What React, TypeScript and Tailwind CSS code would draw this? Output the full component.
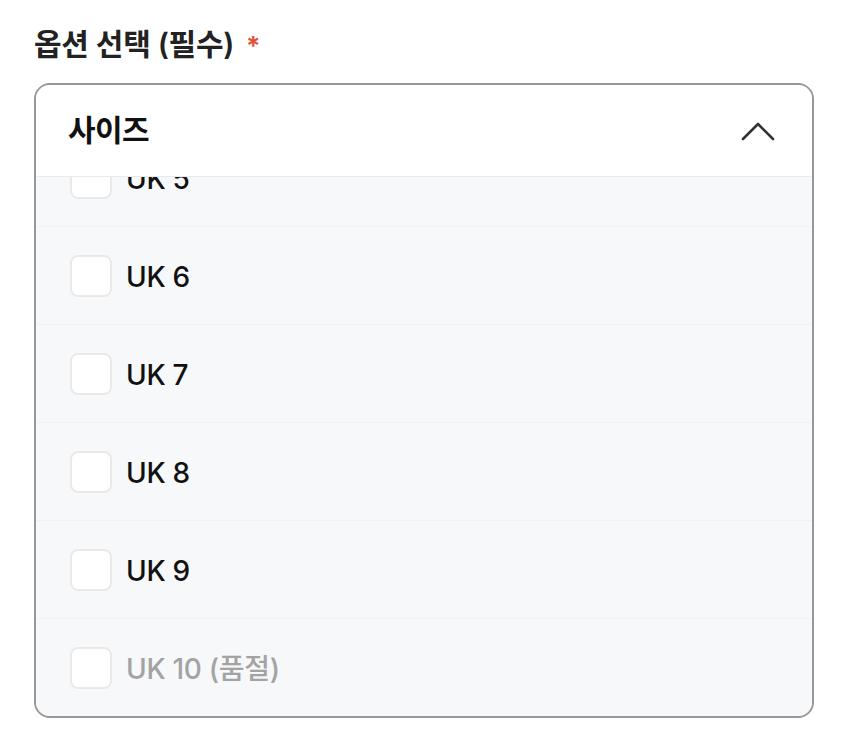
import React, { useEffect, useRef } from "react";

const font = { fontFamily: '"Inter", "Noto Sans CJK KR", sans-serif' };

const options = [
  { label: "UK 5", disabled: false },
  { label: "UK 6", disabled: false },
  { label: "UK 7", disabled: false },
  { label: "UK 8", disabled: false },
  { label: "UK 9", disabled: false },
  { label: "UK 10 (품절)", disabled: true },
];

export default function App() {
  const listRef = useRef<HTMLDivElement>(null);
  useEffect(() => {
    if (listRef.current) listRef.current.scrollTop = 48;
  }, []);

  return (
    <div className="w-[850px] h-[729px] bg-white" style={font}>
      <div className="pl-[34px] pr-[36px] pt-[25px]">
        <div className="flex items-center h-[38px] text-[30px] font-semibold text-[#222] tracking-[-0.3px]">
          <span>옵션 선택 (필수)</span>
          <span className="ml-[12px] mt-[4px] text-[26px] text-[#e0533d] font-bold leading-none">*</span>
        </div>
        <div className="mt-[20px] border-2 border-[#979797] rounded-[16px] overflow-hidden">
          <div className="h-[92px] bg-white flex items-center justify-between pl-[32px] pr-[37px] border-b border-[#e8eaed]">
            <span className="text-[30px] font-bold text-[#111] tracking-[-0.6px]">사이즈</span>
            <svg width="34" height="20" viewBox="0 0 34 20" fill="none">
              <path d="M2 18 L17 3 L32 18" stroke="#333" strokeWidth="2.6" strokeLinecap="round" strokeLinejoin="round" />
            </svg>
          </div>
          <div ref={listRef} className="h-[539px] overflow-hidden bg-[#f7f8fa]">
            {options.map((o) => (
              <div key={o.label} className="h-[98px] flex items-center pl-[34px] border-b border-[#f1f2f5] last:border-b-0">
                <div className="w-[42px] h-[42px] rounded-[8px] border-2 border-[#e9e9e9] bg-white shrink-0" />
                <span
                  className={`ml-[14px] mt-[2px] text-[28px] font-medium tracking-[-0.3px] ${o.disabled ? "text-[#a3a3a3]" : "text-[#111]"}`}
                >
                  {o.label}
                </span>
              </div>
            ))}
          </div>
        </div>
      </div>
    </div>
  );
}
